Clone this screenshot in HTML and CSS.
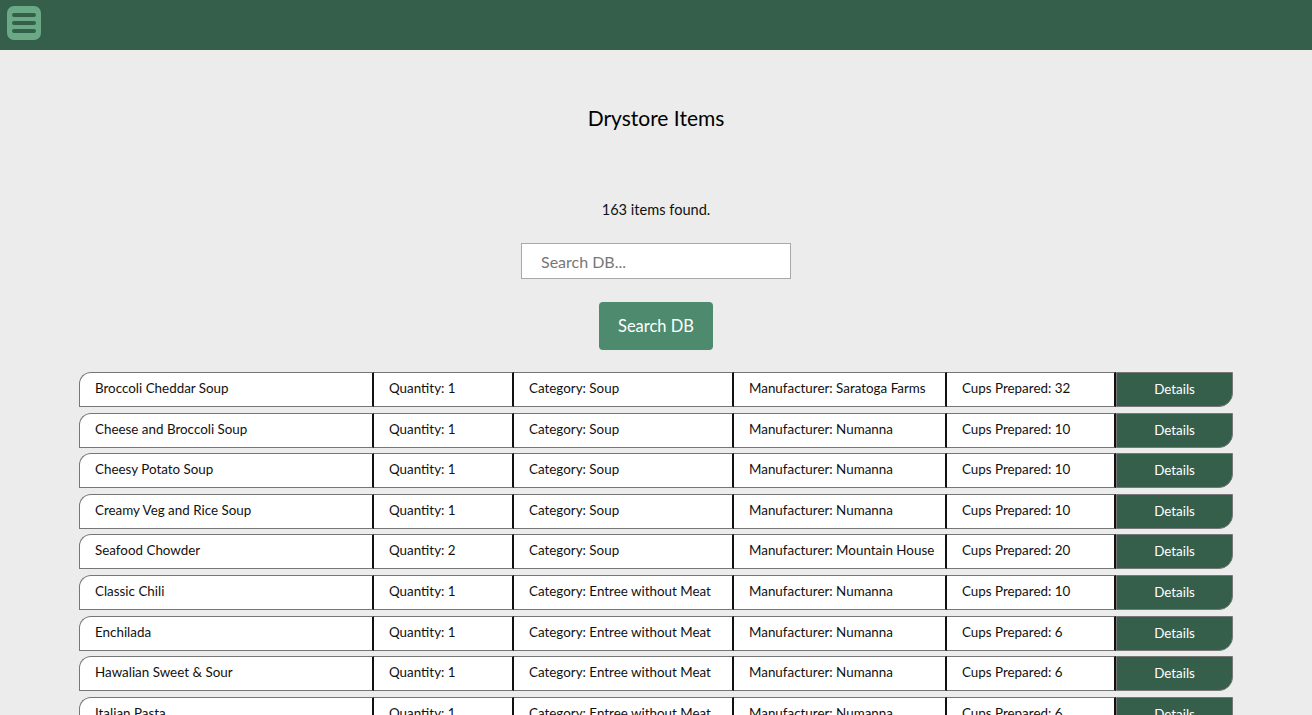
FILE: index.html
```html
<!DOCTYPE html>
<html lang="en">
<head>
<meta charset="utf-8">
<title>Drystore Items</title>
<link rel="stylesheet" href="styles.css">
</head>
<body>
<header class="topbar">
  <button class="menu-btn" aria-label="Menu">
    <svg width="34" height="34" viewBox="0 0 34 34">
      <rect x="0" y="0" width="34" height="34" rx="7" fill="#6aa985"/>
      <rect x="5" y="7" width="24" height="4" rx="2" fill="#365f4b"/>
      <rect x="5" y="15" width="24" height="4" rx="2" fill="#365f4b"/>
      <rect x="5" y="23" width="24" height="4" rx="2" fill="#365f4b"/>
    </svg>
  </button>
</header>
<main class="content">
  <h1 class="title">Drystore Items</h1>
  <p class="count">163 items found.</p>
  <form class="search">
    <input class="search-input" type="text" placeholder="Search DB...">
    <button class="search-btn" type="button">Search DB</button>
  </form>
  <div class="list">
    <div class="row"><div class="cell name">Broccoli Cheddar Soup</div><div class="cell">Quantity: 1</div><div class="cell">Category: Soup</div><div class="cell">Manufacturer: Saratoga Farms</div><div class="cell">Cups Prepared: 32</div><div class="cell details">Details</div></div>
    <div class="row"><div class="cell name">Cheese and Broccoli Soup</div><div class="cell">Quantity: 1</div><div class="cell">Category: Soup</div><div class="cell">Manufacturer: Numanna</div><div class="cell">Cups Prepared: 10</div><div class="cell details">Details</div></div>
    <div class="row"><div class="cell name">Cheesy Potato Soup</div><div class="cell">Quantity: 1</div><div class="cell">Category: Soup</div><div class="cell">Manufacturer: Numanna</div><div class="cell">Cups Prepared: 10</div><div class="cell details">Details</div></div>
    <div class="row"><div class="cell name">Creamy Veg and Rice Soup</div><div class="cell">Quantity: 1</div><div class="cell">Category: Soup</div><div class="cell">Manufacturer: Numanna</div><div class="cell">Cups Prepared: 10</div><div class="cell details">Details</div></div>
    <div class="row"><div class="cell name">Seafood Chowder</div><div class="cell">Quantity: 2</div><div class="cell">Category: Soup</div><div class="cell">Manufacturer: Mountain House</div><div class="cell">Cups Prepared: 20</div><div class="cell details">Details</div></div>
    <div class="row"><div class="cell name">Classic Chili</div><div class="cell">Quantity: 1</div><div class="cell">Category: Entree without Meat</div><div class="cell">Manufacturer: Numanna</div><div class="cell">Cups Prepared: 10</div><div class="cell details">Details</div></div>
    <div class="row"><div class="cell name">Enchilada</div><div class="cell">Quantity: 1</div><div class="cell">Category: Entree without Meat</div><div class="cell">Manufacturer: Numanna</div><div class="cell">Cups Prepared: 6</div><div class="cell details">Details</div></div>
    <div class="row"><div class="cell name">Hawalian Sweet &amp; Sour</div><div class="cell">Quantity: 1</div><div class="cell">Category: Entree without Meat</div><div class="cell">Manufacturer: Numanna</div><div class="cell">Cups Prepared: 6</div><div class="cell details">Details</div></div>
    <div class="row"><div class="cell name">Italian Pasta</div><div class="cell">Quantity: 1</div><div class="cell">Category: Entree without Meat</div><div class="cell">Manufacturer: Numanna</div><div class="cell">Cups Prepared: 6</div><div class="cell details">Details</div></div>
  </div>
</main>
</body>
</html>
```
FILE: styles.css
```css
* { box-sizing: border-box; }
html, body { margin: 0; padding: 0; }
body {
  background: #ececec;
  font-family: Lato, "Open Sans", sans-serif;
  color: #111;
  overflow: hidden;
  height: 715px;
}
.topbar {
  height: 50px;
  background: #365f4b;
  display: flex;
  align-items: center;
  padding-left: 7px;
}
.menu-btn {
  border: 0;
  padding: 0;
  background: none;
  width: 34px;
  height: 34px;
  display: block;
  margin-top: -4px;
}
.menu-btn svg { display: block; }
.content {
  display: flex;
  flex-direction: column;
  align-items: center;
}
.title {
  margin: 53px 0 0;
  height: 30px;
  line-height: 30px;
  font-size: 21px;
  font-weight: 400;
  color: #000;
}
.count {
  margin: 67px 0 0;
  font-size: 14.6px;
  line-height: 20px;
  height: 20px;
}
.search {
  display: flex;
  flex-direction: column;
  align-items: center;
  margin-top: 23px;
}
.search-input {
  width: 270px;
  height: 36px;
  border: 1px solid #a9a9a9;
  background: #fff;
  padding: 0 0 0 19px;
  font-family: inherit;
  font-size: 16px;
  color: #333;
  outline: none;
}
.search-input::placeholder { color: #777; }
.search-btn {
  margin-top: 23px;
  width: 114px;
  height: 48px;
  border: 0;
  border-radius: 4px;
  background: #4e8b6e;
  color: #fff;
  font-family: inherit;
  font-size: 16.5px;
}
.list {
  margin-top: 22px;
  width: 1154px;
  display: flex;
  flex-direction: column;
  gap: 5.6px;
}
.row {
  display: grid;
  grid-template-columns: 295px 140px 220px 213px 169px 117px;
  height: 35px;
}
.cell {
  background: #fff;
  border-top: 1px solid #777;
  border-bottom: 1px solid #777;
  border-right: 2px solid #111;
  display: flex;
  align-items: center;
  padding-left: 15px;
  padding-bottom: 3px;
  font-size: 13.4px;
  color: #111;
  white-space: nowrap;
}
.cell.name {
  border-left: 1px solid #777;
  border-top-left-radius: 12px;
  padding-left: 15px;
}
.cell.details {
  background: #365f4b;
  color: #fff;
  border: 1px solid #777;
  border-bottom-right-radius: 14px;
  justify-content: center;
  padding-left: 0;
  padding-bottom: 1px;
}
```
